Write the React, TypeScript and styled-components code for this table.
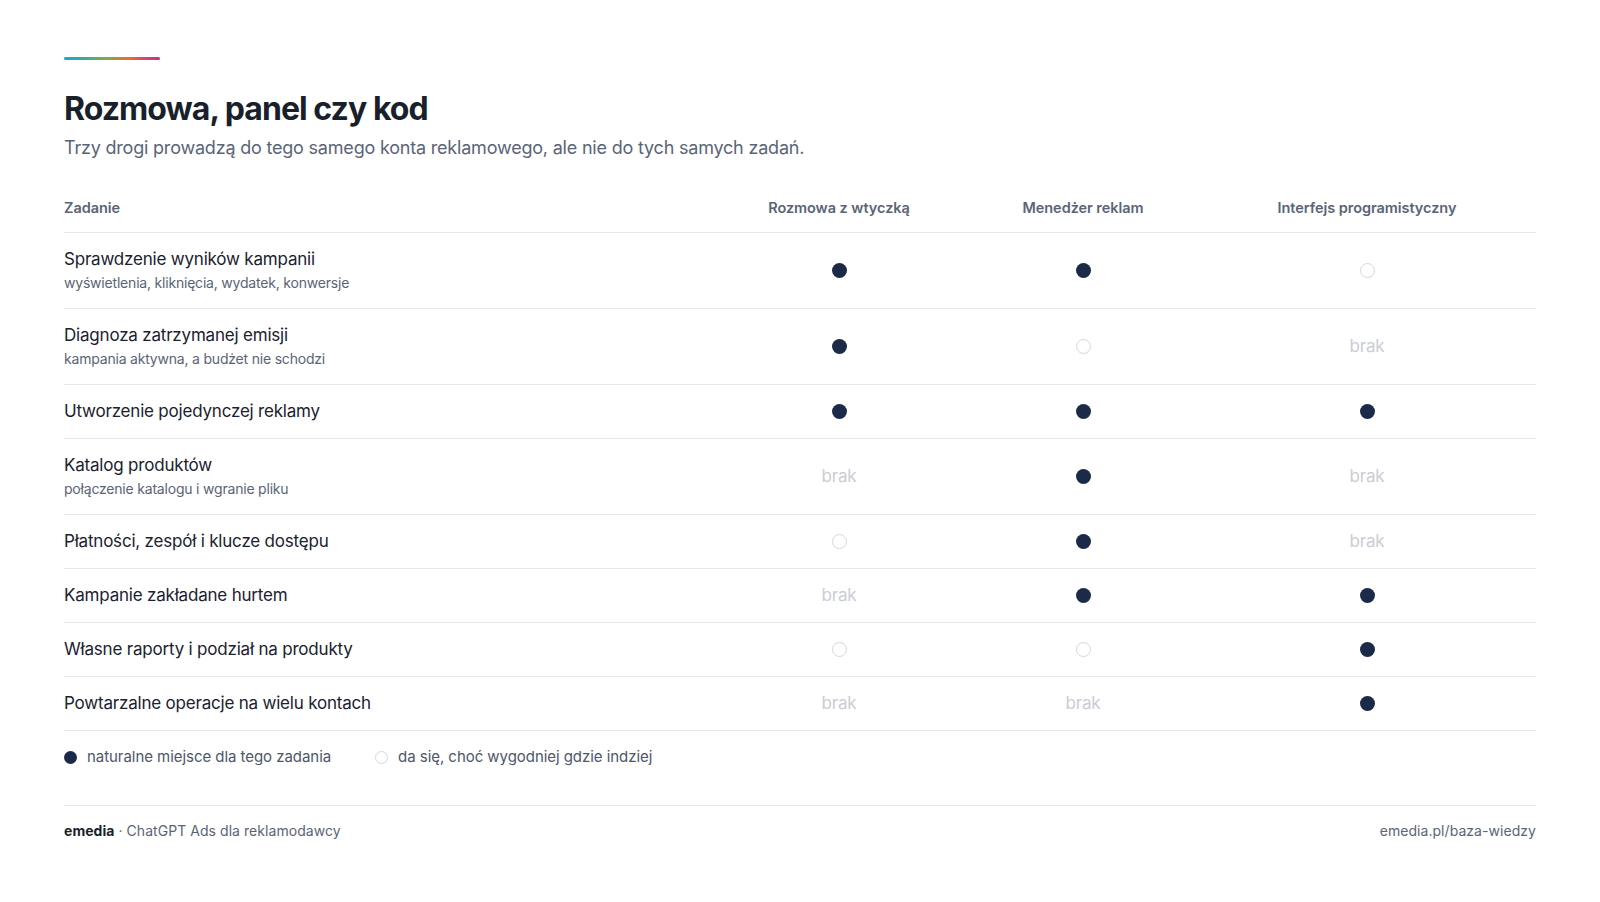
import React from "react";
import styled, { createGlobalStyle } from "styled-components";

const Global = createGlobalStyle`
  html, body { margin: 0; padding: 0; background: #ffffff; }
  body { font-family: "Inter", "Lato", "Noto Sans", sans-serif; -webkit-font-smoothing: antialiased; }
`;

const Page = styled.div`
  width: 1600px;
  height: 902px;
  box-sizing: border-box;
  padding: 57px 64px 0;
  background: #ffffff;
  color: #1b2130;
`;

const Accent = styled.div`
  width: 96px;
  height: 3px;
  border-radius: 2px;
  background: linear-gradient(90deg, #17a9cf 0%, #3aaa9c 22%, #79b043 42%, #f0682e 68%, #e0466a 82%, #c2308a 100%);
`;

const Title = styled.h1`
  margin: 29px 0 0;
  font-size: 32px;
  line-height: 40px;
  font-weight: 700;
  letter-spacing: -0.95px;
  color: #1a1f2c;
`;

const Subtitle = styled.p`
  margin: 6px 0 0;
  font-size: 18px;
  line-height: 26px;
  letter-spacing: -0.2px;
  color: #5b6478;
`;

const Table = styled.div`
  margin-top: 37px;
  display: grid;
  grid-template-columns: 646fr 258fr 230fr 338fr;
`;

const HeadCell = styled.div<{ $center?: boolean }>`
  padding: 0 0 14px;
  border-bottom: 1px solid #e6e8ec;
  font-size: 14.5px;
  line-height: 20px;
  font-weight: 600;
  letter-spacing: -0.05px;
  color: #5b6477;
  text-align: ${(p) => (p.$center ? "center" : "left")};
`;

const Cell = styled.div<{ $center?: boolean }>`
  padding: 14px 0 15px;
  border-bottom: 1px solid #e6e8ec;
  display: flex;
  flex-direction: column;
  justify-content: center;
  align-items: ${(p) => (p.$center ? "center" : "flex-start")};
`;

const TaskName = styled.div`
  font-size: 17px;
  line-height: 24px;
  letter-spacing: -0.2px;
  color: #1b2130;
`;

const TaskNote = styled.div`
  margin-top: 2px;
  font-size: 14px;
  line-height: 20px;
  letter-spacing: -0.2px;
  color: #5b6477;
`;

const Dot = styled.span<{ $filled: boolean; $size?: number }>`
  display: inline-block;
  box-sizing: border-box;
  width: ${(p) => p.$size ?? 15}px;
  height: ${(p) => p.$size ?? 15}px;
  border-radius: 50%;
  background: ${(p) => (p.$filled ? "#1b2a48" : "transparent")};
  border: ${(p) => (p.$filled ? "none" : "1.5px solid #d3d7de")};
  flex-shrink: 0;
`;

const Missing = styled.span`
  font-size: 17px;
  line-height: 24px;
  letter-spacing: -0.2px;
  color: #c9cdd5;
`;

const Legend = styled.div`
  margin-top: 15px;
  display: flex;
  align-items: center;
  gap: 44px;
  height: 22px;
`;

const LegendItem = styled.div`
  display: flex;
  align-items: center;
  gap: 10px;
  font-size: 15px;
  line-height: 22px;
  letter-spacing: -0.05px;
  color: #4d566a;
`;

const Footer = styled.div`
  margin-top: 37px;
  border-top: 1px solid #e6e8ec;
  padding-top: 15px;
  display: flex;
  justify-content: space-between;
  align-items: center;
  font-size: 14px;
  line-height: 20px;
  letter-spacing: 0.05px;
  color: #5b6477;
`;

const Brand = styled.span`
  font-weight: 700;
  color: #1a1f2c;
`;

type Mark = "full" | "empty" | "none";

const rows: { name: string; note?: string; marks: Mark[] }[] = [
  { name: "Sprawdzenie wyników kampanii", note: "wyświetlenia, kliknięcia, wydatek, konwersje", marks: ["full", "full", "empty"] },
  { name: "Diagnoza zatrzymanej emisji", note: "kampania aktywna, a budżet nie schodzi", marks: ["full", "empty", "none"] },
  { name: "Utworzenie pojedynczej reklamy", marks: ["full", "full", "full"] },
  { name: "Katalog produktów", note: "połączenie katalogu i wgranie pliku", marks: ["none", "full", "none"] },
  { name: "Płatności, zespół i klucze dostępu", marks: ["empty", "full", "none"] },
  { name: "Kampanie zakładane hurtem", marks: ["none", "full", "full"] },
  { name: "Własne raporty i podział na produkty", marks: ["empty", "empty", "full"] },
  { name: "Powtarzalne operacje na wielu kontach", marks: ["none", "none", "full"] },
];

const renderMark = (m: Mark) =>
  m === "none" ? <Missing>brak</Missing> : <Dot $filled={m === "full"} />;

export default function App() {
  return (
    <>
      <Global />
      <Page>
        <Accent />
        <Title>Rozmowa, panel czy kod</Title>
        <Subtitle>Trzy drogi prowadzą do tego samego konta reklamowego, ale nie do tych samych zadań.</Subtitle>
        <Table>
          <HeadCell>Zadanie</HeadCell>
          <HeadCell $center>Rozmowa z wtyczką</HeadCell>
          <HeadCell $center>Menedżer reklam</HeadCell>
          <HeadCell $center>Interfejs programistyczny</HeadCell>
          {rows.map((r) => (
            <React.Fragment key={r.name}>
              <Cell>
                <TaskName>{r.name}</TaskName>
                {r.note && <TaskNote>{r.note}</TaskNote>}
              </Cell>
              {r.marks.map((m, i) => (
                <Cell $center key={i}>{renderMark(m)}</Cell>
              ))}
            </React.Fragment>
          ))}
        </Table>
        <Legend>
          <LegendItem>
            <Dot $filled $size={13} />
            naturalne miejsce dla tego zadania
          </LegendItem>
          <LegendItem>
            <Dot $filled={false} $size={13} />
            da się, choć wygodniej gdzie indziej
          </LegendItem>
        </Legend>
        <Footer>
          <span>
            <Brand>emedia</Brand> · ChatGPT Ads dla reklamodawcy
          </span>
          <span>emedia.pl/baza-wiedzy</span>
        </Footer>
      </Page>
    </>
  );
}
